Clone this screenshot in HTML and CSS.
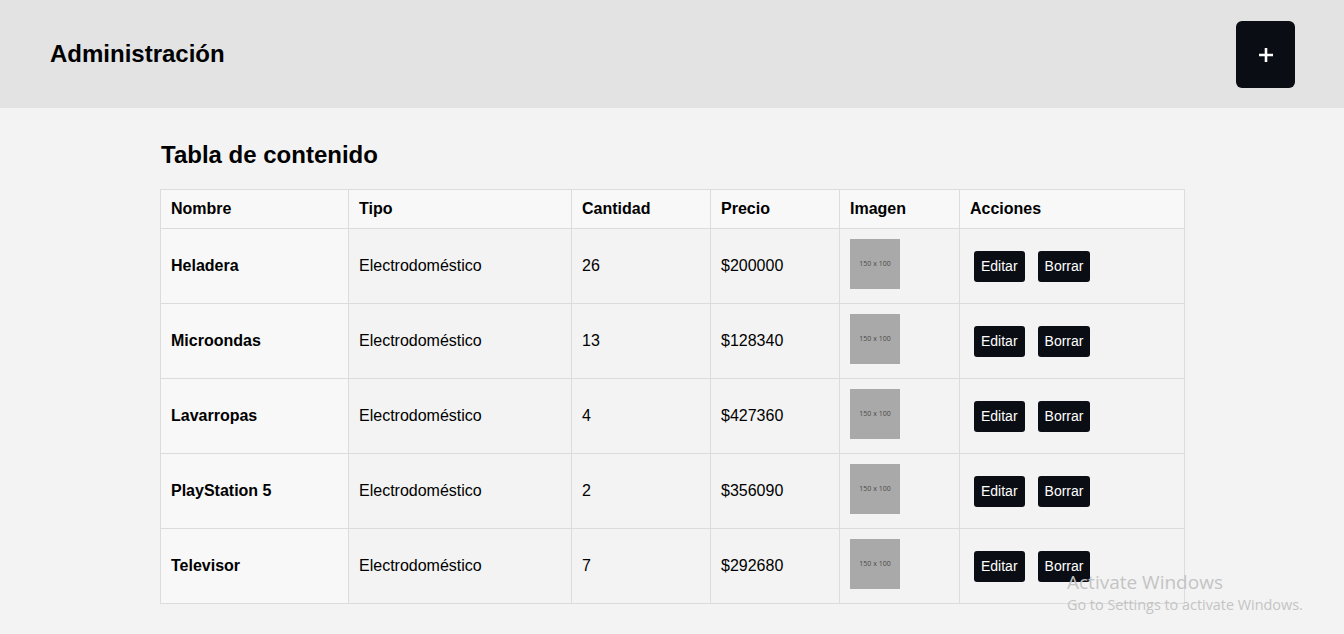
FILE: index.html
```html
<!DOCTYPE html>
<html lang="es">
<head>
<meta charset="utf-8">
<title>Administración</title>
<link rel="stylesheet" href="styles.css">
</head>
<body>
<header class="topbar">
  <h1 class="brand">Administración</h1>
  <button class="add-btn" aria-label="Agregar">
    <svg width="16" height="16" viewBox="0 0 16 16"><path d="M8 1v14M1 8h14" stroke="#fff" stroke-width="2.6" fill="none"/></svg>
  </button>
</header>
<main class="content">
  <h2 class="section-title">Tabla de contenido</h2>
  <table class="data-table">
    <colgroup>
      <col class="c1"><col class="c2"><col class="c3"><col class="c4"><col class="c5"><col class="c6">
    </colgroup>
    <thead>
      <tr><th>Nombre</th><th>Tipo</th><th>Cantidad</th><th>Precio</th><th>Imagen</th><th>Acciones</th></tr>
    </thead>
    <tbody>
      <tr><th>Heladera</th><td>Electrodoméstico</td><td>26</td><td>$200000</td><td><div class="thumb">150 x 100</div></td><td><div class="actions"><button class="btn">Editar</button><button class="btn">Borrar</button></div></td></tr>
      <tr><th>Microondas</th><td>Electrodoméstico</td><td>13</td><td>$128340</td><td><div class="thumb">150 x 100</div></td><td><div class="actions"><button class="btn">Editar</button><button class="btn">Borrar</button></div></td></tr>
      <tr><th>Lavarropas</th><td>Electrodoméstico</td><td>4</td><td>$427360</td><td><div class="thumb">150 x 100</div></td><td><div class="actions"><button class="btn">Editar</button><button class="btn">Borrar</button></div></td></tr>
      <tr><th>PlayStation 5</th><td>Electrodoméstico</td><td>2</td><td>$356090</td><td><div class="thumb">150 x 100</div></td><td><div class="actions"><button class="btn">Editar</button><button class="btn">Borrar</button></div></td></tr>
      <tr><th>Televisor</th><td>Electrodoméstico</td><td>7</td><td>$292680</td><td><div class="thumb">150 x 100</div></td><td><div class="actions"><button class="btn">Editar</button><button class="btn">Borrar</button></div></td></tr>
    </tbody>
  </table>
</main>
<div class="watermark">
  <div class="wm-title">Activate Windows</div>
  <div class="wm-sub">Go to Settings to activate Windows.</div>
</div>
</body>
</html>
```
FILE: styles.css
```css
* { box-sizing: border-box; }
html, body { margin: 0; padding: 0; }
body {
  background: #f3f3f3;
  font-family: "Liberation Sans", Arial, sans-serif;
  color: #000;
  height: 634px;
  overflow: hidden;
}
.topbar {
  height: 108px;
  background: #e3e3e3;
  display: flex;
  align-items: center;
  justify-content: space-between;
  padding: 0 49px 0 50px;
}
.brand {
  margin: 0;
  font-size: 24px;
  font-weight: bold;
  line-height: 28px;
}
.add-btn {
  width: 59px;
  height: 67px;
  border: 0;
  border-radius: 6px;
  background: #0a0e14;
  display: flex;
  align-items: center;
  justify-content: center;
  padding: 0;
  margin-top: 1px;
}
.add-btn svg { display: block; }
.content {
  width: 1024px;
  margin: 0 auto;
  padding-top: 33px;
}
.section-title {
  margin: 0 0 20px 1px;
  font-size: 24px;
  line-height: 28px;
  font-weight: bold;
}
.data-table {
  width: 1024px;
  border-collapse: collapse;
  table-layout: fixed;
  font-size: 16px;
}
.c1 { width: 188px; }
.c2 { width: 223px; }
.c3 { width: 139px; }
.c4 { width: 129px; }
.c5 { width: 120px; }
.c6 { width: 225px; }
.data-table th, .data-table td {
  border: 1px solid #dcdcdc;
  padding: 10px;
  text-align: left;
  vertical-align: middle;
  line-height: 18px;
}
.data-table thead th {
  background: #f8f8f8;
  font-weight: bold;
}
.data-table tbody th {
  background: #f8f8f8;
  font-weight: bold;
}
.data-table tbody td { background: #f3f3f3; }
.data-table tbody td, .data-table tbody th { height: 75px; }
.thumb {
  width: 50px;
  height: 50px;
  background: #a9a9a9;
  color: #4a4a4a;
  font-size: 7px;
  display: flex;
  align-items: center;
  justify-content: center;
  white-space: nowrap;
  font-family: "Open Sans", sans-serif;
  margin-bottom: 4px;
}
.actions {
  display: flex;
  gap: 13px;
  padding-left: 4px;
}
.btn {
  background: #0a0e14;
  color: #fff;
  border: 0;
  border-radius: 3px;
  font-family: "Liberation Sans", Arial, sans-serif;
  font-size: 14px;
  height: 31px;
  padding: 0 7px;
}
.watermark {
  position: absolute;
  left: 1067px;
  top: 571px;
  color: #c4c4c4;
  font-family: "Open Sans", sans-serif;
  pointer-events: none;
}
.wm-title { font-size: 19px; line-height: 22px; }
.wm-sub { font-size: 14.4px; line-height: 20px; margin-top: 2px; }
```
